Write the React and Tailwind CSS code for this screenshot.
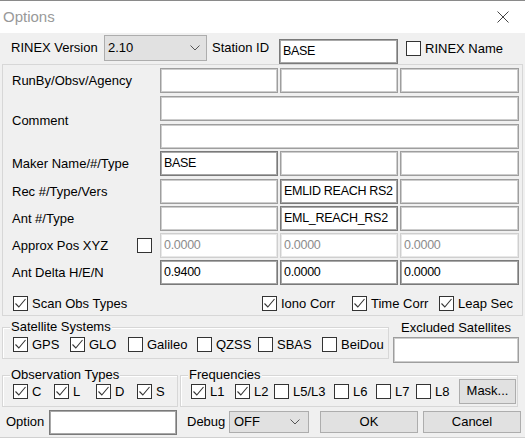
import React from 'react';

const Box = ({ checked }) => (
  <span className="w-[15px] h-[15px] border border-[#333333] bg-white flex items-center justify-center shrink-0">
    {checked && (
      <svg width="13" height="13" viewBox="0 0 13 13">
        <path d="M1.5 6.5 L4.8 10 L11.5 2" fill="none" stroke="#333333" strokeWidth="1.1" />
      </svg>
    )}
  </span>
);

const Check = ({ label, checked, className = '' }) => (
  <div className={`flex items-center shrink-0 ${className}`}>
    <Box checked={checked} />
    <span className="ml-[4px] leading-[15px]">{label}</span>
  </div>
);

const Field = ({ value = '', kind = 'normal', className = '' }) => {
  const styles = {
    normal: 'border-[#9e9e9e] shadow-[inset_0_0_0_1px_#cdcdcd]',
    dark: 'border-[#7a7a7a] shadow-[inset_0_0_0_1px_#a8a8a8]',
    off: 'border-[#cfcfcf] shadow-[inset_0_0_0_1px_#e8e8e8] text-[#8c8c8c]',
  };
  return (
    <div className={`h-[25px] bg-white border flex items-center pl-[3px] shrink-0 whitespace-nowrap overflow-hidden text-[12.5px] tracking-[-0.3px] ${styles[kind]} ${className}`}>
      {value}
    </div>
  );
};

const Chevron = () => (
  <svg width="10" height="6" viewBox="0 0 10 6">
    <path d="M0.5 0.5 L5 5 L9.5 0.5" fill="none" stroke="#555555" strokeWidth="1" />
  </svg>
);

const Group = ({ title, className = '', children }) => (
  <div className={`relative border border-[#d7d7d7] shadow-[inset_1px_1px_0_#ffffff] flex items-center ${className}`}>
    <span className="absolute -top-[8px] left-[7px] bg-[#f0f0f0] px-[1px] leading-[14px]">{title}</span>
    {children}
  </div>
);

const Row = ({ label, children, className = '' }) => (
  <div className={`flex items-center h-[25px] ${className}`}>
    <div className="w-[157px] pl-[9px] shrink-0">{label}</div>
    {children}
  </div>
);

export default function App() {
  return (
    <div className="w-[525px] h-[438px] bg-[#f0f0f0] overflow-hidden text-[13px] text-black font-['Liberation_Sans',Arial,sans-serif]">
      {/* title bar */}
      <div className="h-[33px] bg-white border-t border-[#8a8a8a] flex items-center justify-between pl-[3px] pr-[16px]">
        <span className="text-[15px] text-[#999999]">Options</span>
        <svg width="12" height="12" viewBox="0 0 12 12">
          <path d="M0.5 0.5 L11.5 11.5 M11.5 0.5 L0.5 11.5" stroke="#444444" strokeWidth="1" />
        </svg>
      </div>

      {/* top row */}
      <div className="h-[31px] flex items-start">
        <div className="w-[104px] pl-[11px] mt-[7px] leading-[16px]">RINEX Version</div>
        <div className="w-[103px] h-[26px] mt-[2px] bg-[#e1e1e1] border border-[#adadad] flex items-center justify-between pl-[3px] pr-[6px]">
          <span>2.10</span>
          <Chevron />
        </div>
        <div className="w-[72px] pl-[5px] mt-[7px] leading-[16px]">Station ID</div>
        <Field value="BASE" className="w-[119px] h-[24px] mt-[6px]" kind="dark" />
        <Check label="RINEX Name" className="ml-[8px] mt-[8px]" />
      </div>

      {/* main panel */}
      <div className="mx-[2px] h-[252px] border border-[#d7d7d7] pt-[3px]">
        <Row label="RunBy/Obsv/Agency">
          <Field className="w-[118px]" />
          <Field className="w-[118px] ml-[2px]" />
          <Field className="w-[119px] ml-[2px]" />
        </Row>
        <div className="flex items-center mt-[3px]">
          <div className="w-[157px] pl-[9px] shrink-0 mt-[-3px]">Comment</div>
          <div className="flex flex-col">
            <Field className="w-[359px]" />
            <Field className="w-[359px] mt-[3px]" />
          </div>
        </div>
        <Row label="Maker Name/#/Type" className="mt-[2px]">
          <Field value="BASE" kind="dark" className="w-[118px]" />
          <Field className="w-[118px] ml-[2px]" />
          <Field className="w-[119px] ml-[2px]" />
        </Row>
        <Row label="Rec #/Type/Vers" className="mt-[3px]">
          <Field className="w-[118px]" />
          <Field value="EMLID REACH RS2" kind="dark" className="w-[118px] ml-[2px]" />
          <Field className="w-[119px] ml-[2px]" />
        </Row>
        <Row label="Ant #/Type" className="mt-[2px]">
          <Field className="w-[118px]" />
          <Field value="EML_REACH_RS2" kind="dark" className="w-[118px] ml-[2px]" />
          <Field className="w-[119px] ml-[2px]" />
        </Row>
        <div className="flex items-center h-[25px] mt-[2px]">
          <div className="w-[157px] pl-[9px] shrink-0 flex items-center">
            <span className="w-[125px]">Approx Pos XYZ</span>
            <Box />
          </div>
          <Field value="0.0000" kind="off" className="w-[118px]" />
          <Field value="0.0000" kind="off" className="w-[118px] ml-[2px]" />
          <Field value="0.0000" kind="off" className="w-[119px] ml-[2px]" />
        </div>
        <Row label="Ant Delta H/E/N" className="mt-[2px]">
          <Field value="0.9400" kind="dark" className="w-[118px]" />
          <Field value="0.0000" kind="dark" className="w-[118px] ml-[2px]" />
          <Field value="0.0000" kind="dark" className="w-[119px] ml-[2px]" />
        </Row>
        <div className="flex items-center mt-[11px] pl-[10px]">
          <Check label="Scan Obs Types" checked className="w-[249px]" />
          <Check label="Iono Corr" checked className="w-[90px]" />
          <Check label="Time Corr" checked className="w-[87px]" />
          <Check label="Leap Sec" checked />
        </div>
      </div>

      {/* satellite systems + excluded */}
      <div className="flex items-start">
        <Group title="Satellite Systems" className="ml-[2px] mt-[11px] w-[387px] h-[32px] pl-[10px] pt-[2px]">
          <Check label="GPS" checked className="w-[57px]" />
          <Check label="GLO" checked className="w-[58px]" />
          <Check label="Galileo" className="w-[69px]" />
          <Check label="QZSS" className="w-[61px]" />
          <Check label="SBAS" className="w-[64px]" />
          <Check label="BeiDou" />
        </Group>
        <div className="ml-[4px] w-[126px] flex flex-col">
          <div className="mt-[5px] leading-[14px] text-center">Excluded Satellites</div>
          <Field className="w-[126px] h-[26px] mt-[2px]" />
        </div>
      </div>

      {/* observation types + frequencies */}
      <div className="flex items-start mt-[12px]">
        <Group title="Observation Types" className="ml-[2px] w-[176px] h-[32px] pl-[10px]">
          <Check label="C" checked className="w-[41px]" />
          <Check label="L" checked className="w-[42px]" />
          <Check label="D" checked className="w-[41px]" />
          <Check label="S" checked />
        </Group>
        <Group title="Frequencies" className="ml-[2px] w-[338px] h-[32px] pl-[10px]">
          <Check label="L1" checked className="w-[44px]" />
          <Check label="L2" checked className="w-[39px]" />
          <Check label="L5/L3" className="w-[60px]" />
          <Check label="L6" className="w-[42px]" />
          <Check label="L7" className="w-[40px]" />
          <Check label="L8" className="w-[43px]" />
          <div className="w-[57px] h-[25px] bg-[#e1e1e1] border border-[#adadad] flex items-center justify-center">Mask...</div>
        </Group>
      </div>

      {/* bottom row */}
      <div className="flex items-center h-[24px] mt-[3px]">
        <span className="w-[49px] pl-[6px]">Option</span>
        <Field kind="dark" className="w-[128px] h-[24px]" />
        <span className="w-[52px] pl-[10px]">Debug</span>
        <div className="w-[80px] h-[22px] bg-[#e1e1e1] border border-[#adadad] flex items-center justify-between pl-[4px] pr-[8px]">
          <span>OFF</span>
          <Chevron />
        </div>
        <div className="ml-[11px] w-[98px] h-[22px] bg-[#e1e1e1] border border-[#adadad] flex items-center justify-center">OK</div>
        <div className="ml-[5px] w-[98px] h-[22px] bg-[#e1e1e1] border border-[#adadad] flex items-center justify-center">Cancel</div>
      </div>

      {/* window behind */}
      <div className="mt-[3px] h-[10px] bg-[#f7f7f7] border-t border-[#d0d0d0] flex">
        <div className="w-[82px] border-r border-[#c8c8c8]" />
        <div className="w-[7px] border-r border-[#c8c8c8]" />
        <div className="w-[220px] border-r-2 border-[#3c7fd6]" />
        <div className="w-[31px] border-r border-[#c8c8c8]" />
        <div className="w-[95px] border-r border-[#c8c8c8]" />
        <div className="w-[7px] border-r border-[#c8c8c8]" />
      </div>
    </div>
  );
}
